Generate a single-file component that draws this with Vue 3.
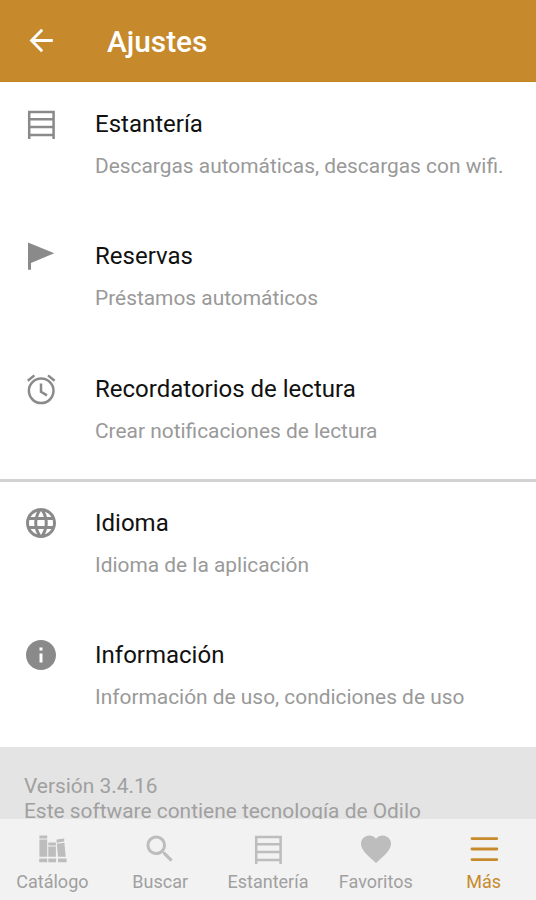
<template>
  <div class="screen">
    <header class="app-bar">
      <svg class="back" viewBox="0 0 36 36">
        <path d="M29.800 17.500H8.600M19.200 6.800L8.600 17.500l10.600 10.700" />
      </svg>
      <h1 class="app-title">Ajustes</h1>
    </header>

    <main class="content">
      <section v-for="(group, i) in groups" :key="i" class="group">
        <div v-for="item in group" :key="item.title" class="row">
          <svg class="row-icon" viewBox="0 0 36 36">
            <g v-if="item.icon === 'shelf'" class="line">
              <path d="M6.2 33V5.9h24.4V33M6.2 13.2h24.4M6.2 21.1h24.4M6.2 29h24.4" />
            </g>
            <path v-else-if="item.icon === 'flag'" d="M5 4.5L31.3 15.2 8 25v6.8H5z" />
            <g v-else-if="item.icon === 'alarm'" class="line">
              <circle cx="18.2" cy="19.8" r="12.3" />
              <path d="M4.8 9.8l6.6-5.4M31.6 9.8L25 4.4M18 12.6v8.2l6 3.6" />
            </g>
            <path v-else :d="paths[item.icon]" transform="scale(1.5)" />
          </svg>
          <div class="row-text">
            <h2 class="row-title">{{ item.title }}</h2>
            <p class="row-sub">{{ item.sub }}</p>
          </div>
        </div>
      </section>

      <footer class="about">
        <p>Versión 3.4.16</p>
        <p>Este software contiene tecnología de Odilo</p>
      </footer>
    </main>

    <nav class="tabs">
      <a v-for="tab in tabs" :key="tab.label" class="tab" :class="{ active: tab.active }">
        <svg class="tab-icon" viewBox="0 0 36 36">
          <path
            v-if="tab.icon === 'books'"
            d="M5.4 4.6h7.8v2.8H5.4zM5.4 8.400h7.800v17.400H5.400zM5.200 27.600h8v3.600h-8zM14.300 11.500h7.600v3h-7.600zM14.300 15.600h7.600v10.200h-7.600zM14.300 27.600h7.800v3.600h-7.800zM22.600 8.600l7.600-1.200v3.200l-7.600 1.200zM22.800 12.800l7.600-1.100 1.300 14.100h-7.700zM24 27.600h8.600v3.600H24z"
          />
          <g v-else-if="tab.icon === 'shelf'" class="line">
            <path d="M6.2 33V5.9h24.4V33M6.2 13.2h24.4M6.2 21.1h24.4M6.2 29h24.4" />
          </g>
          <g v-else-if="tab.icon === 'menu'" class="line bars">
            <path d="M6 7.600h24.800M6 18h24.800M6 28.600h24.800" />
          </g>
          <path v-else :d="paths[tab.icon]" transform="scale(1.5)" />
        </svg>
        <span class="tab-label">{{ tab.label }}</span>
      </a>
    </nav>
  </div>
</template>

<script setup>
const groups = [
  [
    { icon: 'shelf', title: 'Estantería', sub: 'Descargas automáticas, descargas con wifi.' },
    { icon: 'flag', title: 'Reservas', sub: 'Préstamos automáticos' },
    { icon: 'alarm', title: 'Recordatorios de lectura', sub: 'Crear notificaciones de lectura' }
  ],
  [
    { icon: 'globe', title: 'Idioma', sub: 'Idioma de la aplicación' },
    { icon: 'info', title: 'Información', sub: 'Información de uso, condiciones de uso' }
  ]
]

const tabs = [
  { icon: 'books', label: 'Catálogo' },
  { icon: 'search', label: 'Buscar' },
  { icon: 'shelf', label: 'Estantería' },
  { icon: 'heart', label: 'Favoritos' },
  { icon: 'menu', label: 'Más', active: true }
]

// 24px grid glyphs
const paths = {
  globe: 'M11.99 2C6.47 2 2 6.48 2 12s4.47 10 9.99 10C17.52 22 22 17.52 22 12S17.52 2 11.99 2zm6.93 6h-2.95c-.32-1.25-.78-2.45-1.38-3.56 1.84.63 3.37 1.91 4.33 3.56zM12 4.04c.83 1.2 1.48 2.53 1.91 3.96h-3.82c.43-1.43 1.08-2.76 1.91-3.96zM4.26 14C4.1 13.36 4 12.69 4 12s.1-1.36.26-2h3.38c-.08.66-.14 1.32-.14 2s.06 1.34.14 2H4.26zm.82 2h2.95c.32 1.25.78 2.45 1.38 3.56-1.84-.63-3.37-1.9-4.33-3.56zm2.95-8H5.08c.96-1.66 2.49-2.93 4.33-3.56C8.81 5.55 8.35 6.75 8.03 8zM12 19.96c-.83-1.2-1.48-2.53-1.91-3.96h3.82c-.43 1.43-1.08 2.76-1.91 3.96zM14.34 14H9.66c-.09-.66-.16-1.32-.16-2s.07-1.35.16-2h4.68c.09.65.16 1.32.16 2s-.07 1.34-.16 2zm.25 5.56c.6-1.11 1.06-2.31 1.38-3.56h2.95c-.96 1.65-2.49 2.93-4.33 3.56zM16.36 14c.08-.66.14-1.32.14-2s-.06-1.34-.14-2h3.38c.16.64.26 1.31.26 2s-.1 1.36-.26 2h-3.38z',
  info: 'M12 2C6.48 2 2 6.48 2 12s4.48 10 10 10 10-4.48 10-10S17.52 2 12 2zm1 15h-2v-6h2v6zm0-8h-2V7h2v2z',
  search: 'M15.5 14h-.79l-.28-.27C15.41 12.59 16 11.11 16 9.5 16 5.91 13.09 3 9.5 3S3 5.91 3 9.5 5.91 16 9.5 16c1.61 0 3.09-.59 4.23-1.57l.27.28v.79l5 4.99L20.49 19l-4.99-5zm-6 0C7.01 14 5 11.99 5 9.5S7.01 5 9.5 5 14 7.01 14 9.5 11.99 14 9.5 14z',
  heart: 'M12 21.35l-1.45-1.32C5.4 15.36 2 12.28 2 8.5 2 5.42 4.42 3 7.5 3c1.74 0 3.41.81 4.5 2.09C13.09 3.81 14.76 3 16.5 3 19.58 3 22 5.42 22 8.5c0 3.78-3.4 6.86-8.55 11.54L12 21.35z'
}
</script>

<style>
body {
  margin: 0;
}
</style>

<style scoped>
.screen {
  display: flex;
  flex-direction: column;
  height: 900px;
  overflow: hidden;
  background: #fff;
  font-family: Roboto, sans-serif;
}

h1,
h2,
p {
  margin: 0;
  font-weight: 400;
}

svg {
  display: block;
  flex: none;
  width: 36px;
  height: 36px;
  fill: currentColor;
}

.line {
  fill: none;
  stroke: currentColor;
  stroke-width: 2.5;
}

.app-bar {
  display: flex;
  align-items: center;
  flex: none;
  box-sizing: border-box;
  height: 82px;
  padding-left: 23px;
  background: #c68a2c;
  border-bottom: 1px solid #c18620;
  color: #fff;
}

.back {
  fill: none;
  stroke: currentColor;
  stroke-width: 2.9;
}

.app-title {
  margin-left: 48px;
  padding-top: 2px;
  font-size: 29.8px;
  font-weight: 500;
  line-height: 36px;
}

.content {
  flex: 1;
  min-height: 0;
  overflow: hidden;
}

.group + .group {
  border-top: 3px solid #d2d2d2;
}

.row {
  display: flex;
  box-sizing: border-box;
  height: 132.4px;
  padding: 24px 0 0 23px;
}

.group + .group .row {
  height: 132.3px;
  padding-top: 23px;
}

.row-icon {
  color: #8a8a8a;
}

.row-text {
  margin-left: 36px;
  white-space: nowrap;
}

.row-title {
  font-size: 24px;
  line-height: 36px;
  color: #111;
}

.row-sub {
  margin-top: 9px;
  font-size: 20.9px;
  line-height: 30px;
  color: #999;
}

.about {
  height: 100px;
  padding: 27px 24px 0;
  background: #e4e4e4;
  font-size: 20.9px;
  line-height: 25px;
  color: #a0a0a0;
}

.tabs {
  display: flex;
  flex: none;
  height: 81px;
  margin: 0 -1.5px;
  background: #f2f2f2;
}

.tab {
  display: flex;
  flex: 1;
  flex-direction: column;
  align-items: center;
  padding-top: 11.5px;
  color: #a0a0a0;
}

.tab-icon {
  color: #bdbdbd;
}

.bars {
  stroke-width: 2.9;
  stroke-linecap: round;
}

.tab-label {
  margin-top: 4px;
  font-size: 18px;
  line-height: 22px;
}

.active,
.active .tab-icon {
  color: #c68a2c;
}
</style>
